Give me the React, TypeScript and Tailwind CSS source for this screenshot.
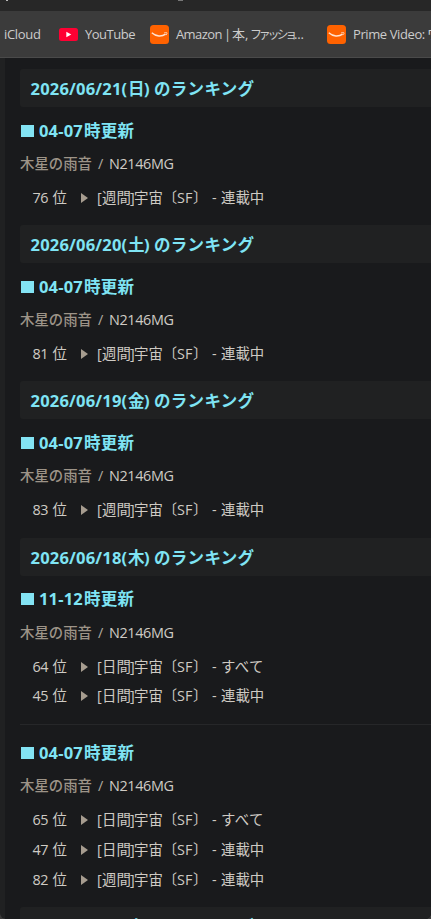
const CJK = "font-['Open_Sans','Noto_Sans_CJK_JP',sans-serif]";

type Entry = { rank: string; period: string; status: string };
type Update = { time: string; entries: Entry[] };
type Day = { date: string; weekday: string; updates: Update[] };

const weekly = (rank: string): Update[] => [
  { time: "04-07", entries: [{ rank, period: "週間", status: "連載中" }] },
];

const days: Day[] = [
  { date: "2026/06/21", weekday: "日", updates: weekly("76") },
  { date: "2026/06/20", weekday: "土", updates: weekly("81") },
  { date: "2026/06/19", weekday: "金", updates: weekly("83") },
  {
    date: "2026/06/18",
    weekday: "木",
    updates: [
      {
        time: "11-12",
        entries: [
          { rank: "64", period: "日間", status: "すべて" },
          { rank: "45", period: "日間", status: "連載中" },
        ],
      },
      {
        time: "04-07",
        entries: [
          { rank: "65", period: "日間", status: "すべて" },
          { rank: "47", period: "日間", status: "連載中" },
          { rank: "82", period: "週間", status: "連載中" },
        ],
      },
    ],
  },
  { date: "2026/06/17", weekday: "水", updates: [] },
];

function AmazonIcon() {
  return (
    <svg className="h-[19px] w-[19px] shrink-0" viewBox="0 0 19 19">
      <rect width="19" height="19" rx="3.500" fill="#ff6200" />
      <path d="M1.800 7.800c4.200 3.900 10 4.100 13.800 1.300" fill="none" stroke="#ffe3d2" strokeWidth="1.400" />
      <path d="M14 8c1-.5 2.600-.6 3-.2.200.6-.2 1.600-.9 2.300" fill="none" stroke="#ffe3d2" strokeWidth=".8" />
    </svg>
  );
}

function YouTubeIcon() {
  return (
    <svg className="h-[13px] w-[19px] shrink-0" viewBox="0 0 19 13">
      <rect width="19" height="13" rx="2.500" fill="#ff0033" />
      <path d="M7.300 3.700v5.600l5-2.800z" fill="#fff" />
    </svg>
  );
}

function DayHeading({ day }: { day: Day }) {
  const collapsed = day.updates.length === 0;
  return (
    <h2
      className={`flex h-[38px] shrink-0 items-center rounded-l-[3px] bg-[#202122] pl-[10.5px] text-[16.5px] font-bold whitespace-nowrap text-[#7fe4f4] ${collapsed ? "pt-[3px]" : "pt-[2px]"}`}
    >
      <span className="w-[97.5px] tracking-[0.2px]">{day.date}(</span>
      <span className="w-[16px]">{day.weekday}</span>
      <span className="w-[10px]">)</span>
      <span className="tracking-[0.3px]">のランキング</span>
    </h2>
  );
}

function UpdateBlock({ update, compact }: { update: Update; compact: boolean }) {
  return (
    <section>
      <h3
        className={`flex items-center text-[16.5px] font-bold whitespace-nowrap text-[#7fe4f4] ${compact ? "mb-[2px] h-[46px]" : "h-[48px]"}`}
      >
        <span className="ml-px h-[12px] w-[13px] bg-[#83e3f3]" />
        <span className="ml-[5px] w-[45px] tracking-[0.15px]">{update.time}</span>
        <span className="tracking-[0.2px]">時更新</span>
      </h3>
      <div className="flex h-[18px] items-center text-[14.4px] whitespace-nowrap">
        <span className="w-[78px] font-medium text-[#9d9488]">木星の雨音</span>
        <span className="w-[11px] text-[#b0aaa0]">/</span>
        <span className="tracking-[-0.35px] text-[#cfcbc4]">N2146MG</span>
      </div>
      <ul className="pt-[10px] text-[14.4px] text-[#cfcbc4]">
        {update.entries.map((entry, i) => (
          <li
            key={entry.rank}
            className={`flex items-center pl-[12.5px] whitespace-nowrap ${compact && i === 1 ? "h-[28px]" : "h-[30px]"}`}
          >
            <span className="w-[20px] tracking-[-0.4px]">{entry.rank}</span>
            <span className="w-[28px]">位</span>
            <svg className="mr-[9.5px] h-[10px] w-[7px]" viewBox="0 0 7 10">
              <path d="M0 0v10L7 5z" fill="#a69c8f" />
            </svg>
            <span className="w-[5px]">[</span>
            <span className="w-[28px]">{entry.period}</span>
            <span className="w-[4px]">]</span>
            <span className="w-[43px]">宇宙〔</span>
            <span className="w-[16px]">SF</span>
            <span className="w-[19px]">〕</span>
            <span className="w-[9px]">-</span>
            <span className={entry.status === "すべて" ? "tracking-[0.4px]" : ""}>{entry.status}</span>
          </li>
        ))}
      </ul>
    </section>
  );
}

export default function App() {
  return (
    <div className={`h-[919px] w-[431px] bg-[#3b3b3b] ${CJK}`}>
      <div className="flex h-full flex-col overflow-hidden rounded-b-[6px] bg-[#202122]">
        <div className="relative h-[11px] shrink-0 bg-[#272727]">
          <span className="absolute top-0 left-[6px] h-px w-[2px] bg-[#b8b8b8]" />
          <span className="absolute top-0 left-[178px] h-px w-[5px] bg-[#777777]" />
        </div>
        <nav className="flex h-[47px] shrink-0 items-center overflow-hidden border-b border-[#4a4a4a] bg-[#3b3b3b] pt-px pl-[4px] text-[13px] whitespace-nowrap text-[#cccccc]">
          <span className="w-[55px] shrink-0 tracking-[-0.3px]">iCloud</span>
          <YouTubeIcon />
          <span className="ml-[7px] w-[65px] shrink-0 tracking-[-0.5px]">YouTube</span>
          <AmazonIcon />
          <span className="ml-[7px] w-[48px] shrink-0 tracking-[-0.6px]">Amazon</span>
          <span className="w-[8px] shrink-0">|</span>
          <span className="w-[13px] shrink-0">本</span>
          <span className="w-[5px] shrink-0">,</span>
          <span className="w-[44px] shrink-0 text-[12px] tracking-[-3.2px]">ファッショ</span>
          <span className="w-[33px] shrink-0 tracking-[-0.2px]">...</span>
          <AmazonIcon />
          <span className="ml-[7px] w-[74px] shrink-0 tracking-[-0.4px]">Prime Video:</span>
          <span className="shrink-0">ワ</span>
        </nav>
        <main className="ml-[5px] flex min-h-0 flex-1 flex-col overflow-hidden bg-[#191a1c] pt-[11px] pl-[15px]">
          {days.map((day, index) => (
            <article key={day.date} className={index === 2 ? "mb-[13px]" : "mb-[12px]"}>
              <DayHeading day={day} />
              {day.updates.map((update, i) => (
                <div key={update.time} className={i > 0 ? "mt-[14px] border-t border-[#262729] pt-[4px]" : ""}>
                  <UpdateBlock update={update} compact={index === 3 && i === 0} />
                </div>
              ))}
            </article>
          ))}
        </main>
      </div>
    </div>
  );
}
